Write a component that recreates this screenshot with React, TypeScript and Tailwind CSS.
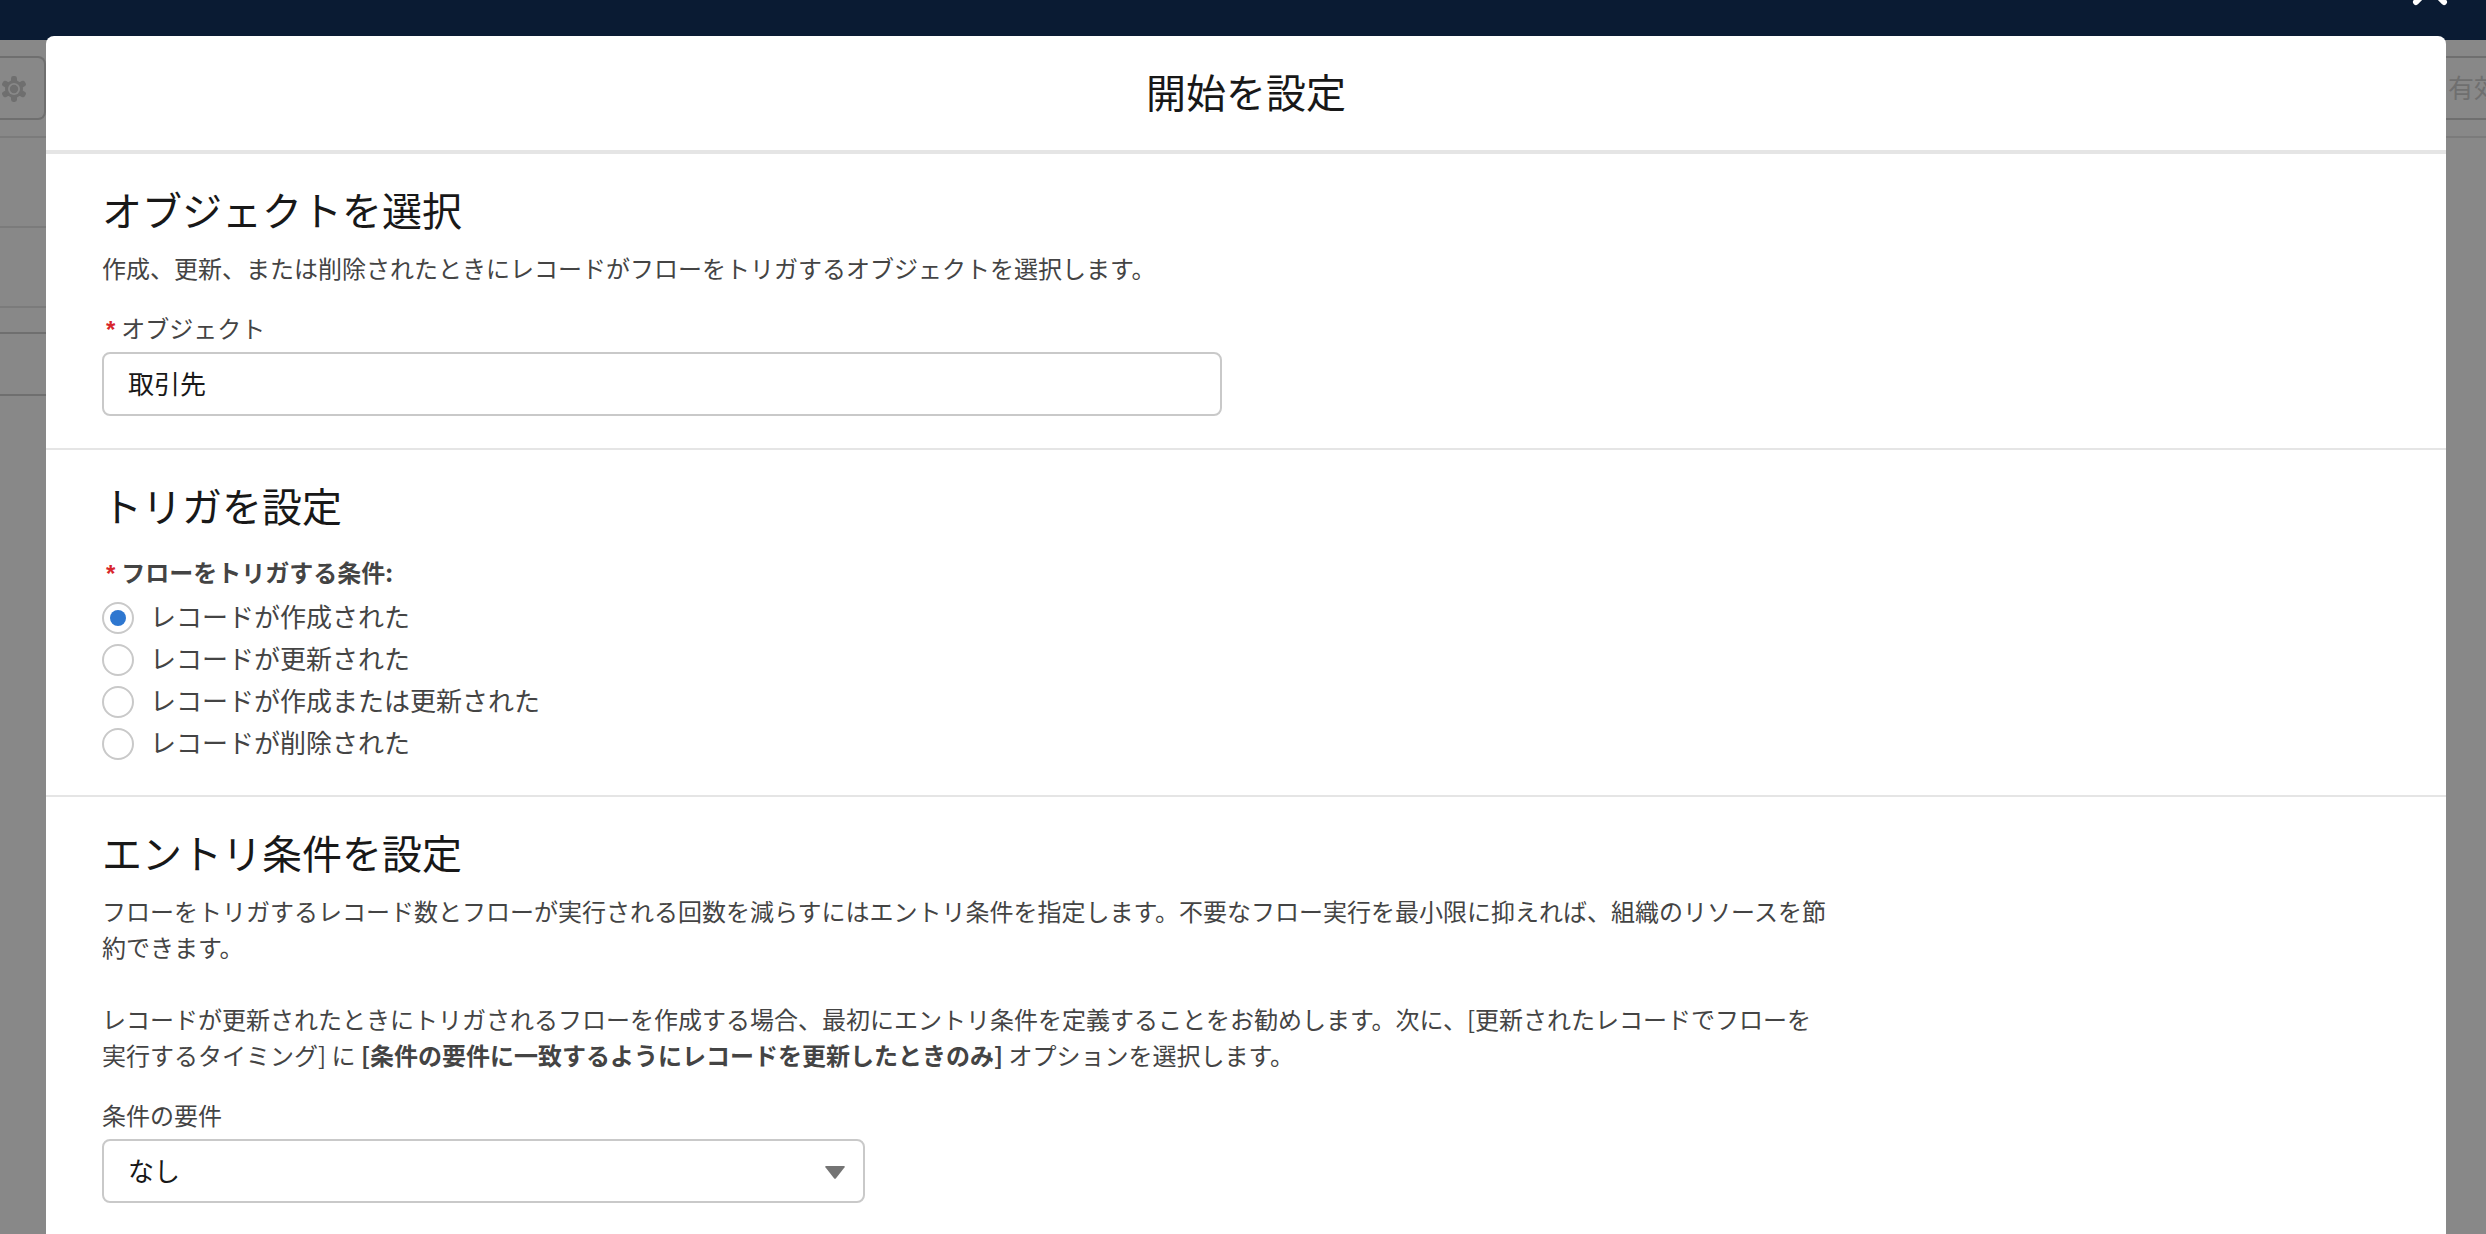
import React, { useState } from "react";

const TRIGGERS = [
  "レコードが作成された",
  "レコードが更新された",
  "レコードが作成または更新された",
  "レコードが削除された",
];

function Required() {
  return (
    <span
      className="mr-[6px] font-['Liberation_Sans',sans-serif] leading-none font-bold text-[#d8262c]"
      aria-hidden="true"
    >
      *
    </span>
  );
}

function SectionTitle({ children }: { children: React.ReactNode }) {
  return <h2 className="text-[40px] leading-[50px]">{children}</h2>;
}

function GearIcon() {
  return (
    <svg viewBox="0 0 24 26" className="h-[26px] w-6 shrink-0" fill="#6f6f6f">
      {[0, 60, 120].map((a) => (
        <rect key={a} x="9" y="0" width="6" height="26" rx="2.4" transform={`rotate(${a} 12 13)`} />
      ))}
      <circle cx="12" cy="13" r="9" />
      <circle cx="12" cy="13" r="6" fill="#888888" />
      <circle cx="12" cy="13" r="4.2" />
    </svg>
  );
}

function Backdrop() {
  return (
    <div className="absolute inset-0 flex flex-col bg-[#888888]">
      <div className="h-10 bg-[#0a1b33]" />
      <div className="flex h-[98px] items-center justify-between border-b-2 border-[#7b7b7b]">
        <button
          type="button"
          aria-label="設定"
          className="flex h-16 w-[46px] items-center rounded-r-lg border-2 border-l-0 border-[#6f6f6f] pt-[2px] pl-[2px]"
        >
          <GearIcon />
        </button>
        <button
          type="button"
          className="h-16 w-[46px] overflow-hidden border-y-2 border-[#6f6f6f] pb-1 pl-2 text-left text-[26px] whitespace-nowrap text-[#6f6f6f]"
        >
          有効化
        </button>
      </div>
      <div className="flex w-[46px] flex-col">
        <div className="h-[90px] border-b-2 border-[#7b7b7b]" />
        <div className="h-20 border-b-2 border-[#7b7b7b]" />
        <div className="h-[26px] border-b-2 border-[#6f6f6f]" />
        <div className="h-[62px] border-b-2 border-[#6f6f6f]" />
      </div>
    </div>
  );
}

export default function App() {
  const [object, setObject] = useState("取引先");
  const [trigger, setTrigger] = useState(0);

  return (
    <div
      lang="ja"
      className="relative h-screen overflow-hidden font-['Noto_Sans_CJK_JP',sans-serif] text-[#181818]"
    >
      <Backdrop />

      <button type="button" aria-label="閉じる" className="absolute top-[-29px] right-[38px] size-9">
        <svg viewBox="0 0 36 36" className="size-9" stroke="#ffffff" strokeWidth="6" strokeLinecap="round">
          <path d="M4 2L32 31M32 2L4 31" />
        </svg>
      </button>

      <main
        role="dialog"
        aria-labelledby="dialog-title"
        className="relative mt-9 mr-10 ml-[46px] h-full rounded-t-lg bg-white"
      >
        <header className="border-b-4 border-[#e5e5e5] pt-[30px] pb-[34px]">
          <h1 id="dialog-title" className="text-center text-[40px] leading-[50px]">
            開始を設定
          </h1>
        </header>

        <section className="border-b-2 border-[#e5e5e5] px-14 pt-[30px] pb-8">
          <SectionTitle>オブジェクトを選択</SectionTitle>
          <p className="mt-4 text-[24px] leading-9 text-[#444444]">
            作成、更新、または削除されたときにレコードがフローをトリガするオブジェクトを選択します。
          </p>
          <label htmlFor="object" className="mt-6 block h-9 pl-1 text-[24px] leading-9 text-[#444444]">
            <Required />
            オブジェクト
          </label>
          <div className="mt-[6px] w-1/2 pr-6">
            <input
              id="object"
              type="text"
              value={object}
              onChange={(e) => setObject(e.target.value)}
              className="block h-16 w-full rounded-lg border-2 border-[#c9c9c9] px-6 pb-[3px] text-[26px]"
            />
          </div>
        </section>

        <section className="border-b-2 border-[#e5e5e5] px-14 pt-[30px] pb-[35px]">
          <SectionTitle>トリガを設定</SectionTitle>
          <fieldset className="mt-6">
            <legend className="h-9 pl-1 text-[24px] leading-9 font-bold text-[#444444]">
              <Required />
              フローをトリガする条件:
            </legend>
            <div className="mt-3 flex flex-col items-start gap-[10px]">
              {TRIGGERS.map((text, i) => (
                <label key={text} className="flex items-center gap-4 text-[26px] leading-7 text-[#444444]">
                  <input
                    type="radio"
                    name="trigger"
                    checked={trigger === i}
                    onChange={() => setTrigger(i)}
                    className="grid size-8 shrink-0 appearance-none place-items-center rounded-full border-2 border-[#c9c9c9] bg-white before:size-4 before:rounded-full checked:before:bg-[#2e77d0]"
                  />
                  <span className="pb-1">{text}</span>
                </label>
              ))}
            </div>
          </fieldset>
        </section>

        <section className="px-14 pt-[30px]">
          <SectionTitle>エントリ条件を設定</SectionTitle>
          <div className="mt-4 max-w-[1730px] text-[24px] leading-9 text-[#444444]">
            <p>
              フローをトリガするレコード数とフローが実行される回数を減らすにはエントリ条件を指定します。不要なフロー実行を最小限に抑えれば、組織のリソースを節約できます。
            </p>
            <p className="mt-9">
              レコードが更新されたときにトリガされるフローを作成する場合、最初にエントリ条件を定義することをお勧めします。次に、[更新されたレコードでフローを実行するタイミング] に{" "}
              <b>[条件の要件に一致するようにレコードを更新したときのみ]</b> オプションを選択します。
            </p>
          </div>
          <label htmlFor="requirement" className="mt-6 block h-9 text-[24px] leading-9 text-[#444444]">
            条件の要件
          </label>
          <div className="relative mt-[6px] w-1/3">
            <select
              id="requirement"
              className="block h-16 w-full appearance-none rounded-lg border-2 border-[#c9c9c9] bg-white px-6 pb-[3px] text-[26px]"
            >
              <option>なし</option>
            </select>
            <svg
              viewBox="0 0 20 13"
              className="pointer-events-none absolute top-[27px] right-5 h-[13px] w-5"
              fill="#747474"
            >
              <path d="M1 0H19Q20.4 0 19.6 1.2L11 12.3Q10 13.4 9 12.3L0.4 1.2Q-0.4 0 1 0Z" />
            </svg>
          </div>
        </section>
      </main>
    </div>
  );
}
